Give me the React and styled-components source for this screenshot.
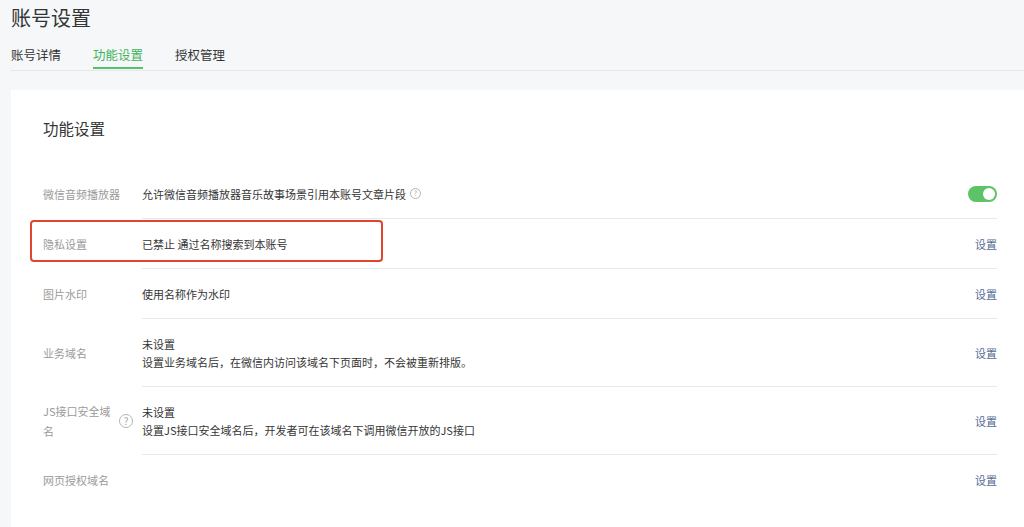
import React from "react";
import styled, { createGlobalStyle } from "styled-components";

const Global = createGlobalStyle`
  html, body { margin: 0; background: #f6f7f9; }
  body { font-family: "Noto Sans CJK SC", "Liberation Sans", sans-serif; color: #353535; }
`;

const Page = styled.div`
  padding-left: 11px;
  height: 527px;
  overflow: hidden;
`;
const Title = styled.h1`
  margin: 0;
  padding-top: 4px;
  height: 38px;
  font-size: 20px;
  font-weight: 400;
  color: #353535;
  line-height: 28px;
`;
const Tabs = styled.div`
  display: flex;
  gap: 32px;
  border-bottom: 1px solid #e4e6ea;
  height: 28px;
`;
const Tab = styled.div`
  font-size: 12.5px;
  line-height: 26px;
  color: ${p => (p.$active ? "#3fb35a" : "#353535")};
  border-bottom: 2px solid ${p => (p.$active ? "#56c16a" : "transparent")};
  height: 27px;
  box-sizing: border-box;
  margin-bottom: -1px;
`;
const Card = styled.div`
  margin-top: 19px;
  background: #fff;
  padding: 26px 27px 0 32px;
  min-height: 500px;
`;
const CardTitle = styled.h2`
  margin: 0 0 29px;
  font-size: 15.5px;
  font-weight: 400;
  line-height: 24px;
  color: #353535;
`;
const Row = styled.div`
  position: relative;
  display: flex;
  align-items: center;
  height: ${p => p.$h}px;
`;
const Label = styled.div`
  width: 99px;
  flex-shrink: 0;
  font-size: 11px;
  color: #9a9a9a;
  display: flex;
  align-items: center;
  gap: 8px;
  line-height: 20px;
`;
const Body = styled.div`
  flex: 1;
  align-self: stretch;
  display: flex;
  align-items: center;
  justify-content: space-between;
  border-bottom: ${p => (p.$last ? "none" : "1px solid #e8e9ed")};
`;
const Text = styled.div`
  font-size: 11px;
  color: #353535;
  line-height: 18px;
  display: flex;
  flex-direction: column;
`;
const Inline = styled.span`
  display: inline-flex;
  align-items: center;
  gap: 4px;
`;
const Help = styled.span`
  display: inline-flex;
  align-items: center;
  justify-content: center;
  width: ${p => p.$s}px;
  height: ${p => p.$s}px;
  border: 1px solid #b5b5b5;
  border-radius: 50%;
  color: #a5a5a5;
  font-size: ${p => p.$s - 4}px;
  line-height: 1;
  box-sizing: border-box;
  flex-shrink: 0;
`;
const Action = styled.a`
  font-size: 11px;
  color: #576b95;
`;
const Toggle = styled.div`
  width: 29px;
  height: 16px;
  border-radius: 8px;
  background: #5ec266;
  position: relative;
  &::after {
    content: "";
    position: absolute;
    right: 2px;
    top: 2px;
    width: 12px;
    height: 12px;
    border-radius: 50%;
    background: #fff;
  }
`;
const Highlight = styled.div`
  position: absolute;
  left: -13px;
  top: 1px;
  width: 353px;
  height: 42px;
  border: 2px solid #e0452f;
  border-radius: 4px;
  box-sizing: border-box;
`;

export default function App() {
  return (
    <>
      <Global />
      <Page>
        <Title>账号设置</Title>
        <Tabs>
          <Tab>账号详情</Tab>
          <Tab $active>功能设置</Tab>
          <Tab>授权管理</Tab>
        </Tabs>
        <Card>
          <CardTitle>功能设置</CardTitle>
          <Row $h={50}>
            <Label>微信音频播放器</Label>
            <Body>
              <Text><Inline>允许微信音频播放器音乐故事场景引用本账号文章片段<Help $s={11}>?</Help></Inline></Text>
              <Toggle />
            </Body>
          </Row>
          <Row $h={50}>
            <Highlight />
            <Label>隐私设置</Label>
            <Body>
              <Text>已禁止 通过名称搜索到本账号</Text>
              <Action>设置</Action>
            </Body>
          </Row>
          <Row $h={50}>
            <Label>图片水印</Label>
            <Body>
              <Text>使用名称作为水印</Text>
              <Action>设置</Action>
            </Body>
          </Row>
          <Row $h={68}>
            <Label>业务域名</Label>
            <Body>
              <Text><span>未设置</span><span>设置业务域名后，在微信内访问该域名下页面时，不会被重新排版。</span></Text>
              <Action>设置</Action>
            </Body>
          </Row>
          <Row $h={68}>
            <Label><span style={{ width: 68 }}>JS接口安全域名</span><Help $s={14}>?</Help></Label>
            <Body>
              <Text><span>未设置</span><span>设置JS接口安全域名后，开发者可在该域名下调用微信开放的JS接口</span></Text>
              <Action>设置</Action>
            </Body>
          </Row>
          <Row $h={50}>
            <Label>网页授权域名</Label>
            <Body $last>
              <Text></Text>
              <Action>设置</Action>
            </Body>
          </Row>
        </Card>
      </Page>
    </>
  );
}
